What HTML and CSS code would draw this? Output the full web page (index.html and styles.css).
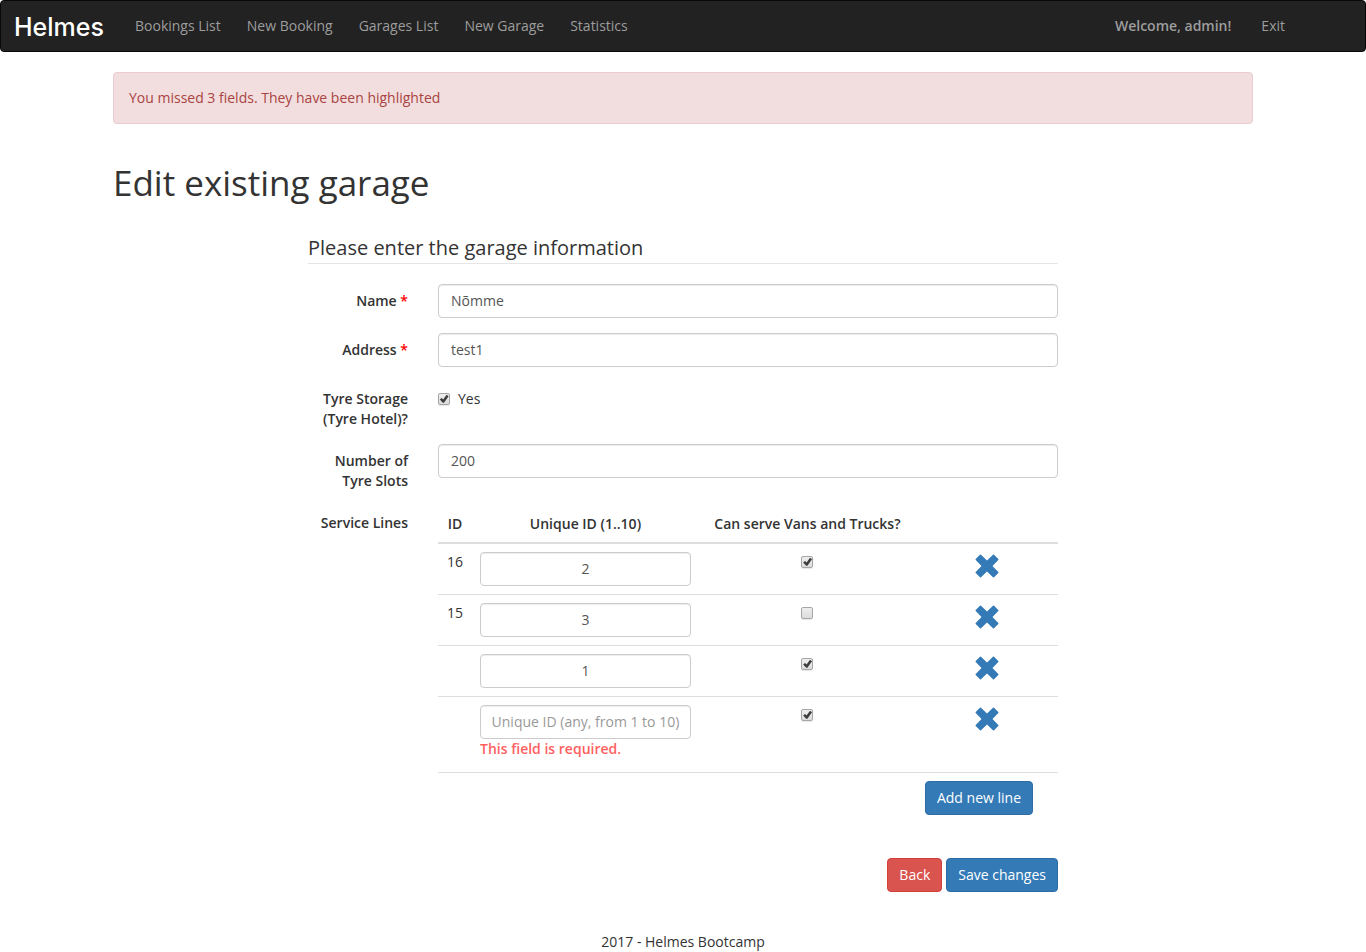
FILE: index.html
```html
<!DOCTYPE html>
<html lang="en">
<head>
<meta charset="utf-8">
<meta name="viewport" content="width=device-width, initial-scale=1">
<title>Edit existing garage</title>
<link rel="stylesheet" href="styles.css">
</head>
<body>
<svg class="sprite" aria-hidden="true">
  <symbol id="remove" viewBox="0 0 24 24"><path d="M6 .700 12 6.500 18 .700Q18.500 .300 19 .700L23.300 5Q23.700 5.500 23.300 6L17.500 12 23.300 18Q23.700 18.500 23.300 19L19 23.300Q18.500 23.700 18 23.300L12 17.500 6 23.300Q5.500 23.700 5 23.300L.700 19Q.300 18.500 .700 18L6.500 12 .700 6Q.300 5.500 .700 5L5 .700Q5.500 .300 6 .700Z" fill="currentColor"/></symbol>
</svg>
<nav class="navbar">
  <a class="brand" href="#">Helmes</a>
  <a class="nav-link" href="#">Bookings List</a>
  <a class="nav-link" href="#">New Booking</a>
  <a class="nav-link" href="#">Garages List</a>
  <a class="nav-link" href="#">New Garage</a>
  <a class="nav-link" href="#">Statistics</a>
  <div class="nav-user">
    <a class="nav-link" href="#"><strong>Welcome, admin!</strong></a>
    <a class="nav-link" href="#">Exit</a>
  </div>
</nav>
<main class="container">
  <div class="alert" role="alert">You missed 3 fields. They have been highlighted</div>
  <h1>Edit existing garage</h1>
  <form class="garage-form">
    <h2 class="legend">Please enter the garage information</h2>
    <div class="form-group">
      <label class="control-label" for="name">Name <span class="required">*</span></label>
      <input class="form-control" id="name" type="text" value="Nõmme">
    </div>
    <div class="form-group">
      <label class="control-label" for="address">Address <span class="required">*</span></label>
      <input class="form-control" id="address" type="text" value="test1">
    </div>
    <div class="form-group">
      <label class="control-label" for="storage">Tyre Storage (Tyre Hotel)?</label>
      <label class="check-label"><input class="check" id="storage" type="checkbox" checked>Yes</label>
    </div>
    <div class="form-group">
      <label class="control-label" for="slots">Number of Tyre Slots</label>
      <input class="form-control" id="slots" type="text" value="200">
    </div>
    <div class="form-group">
      <span class="control-label" id="lines-label">Service Lines</span>
      <table class="lines" aria-labelledby="lines-label">
        <thead>
          <tr><th class="col-id">ID</th><th class="col-unique">Unique ID (1..10)</th><th class="col-vans">Can serve Vans and Trucks?</th><th></th></tr>
        </thead>
        <tbody>
          <tr>
            <td>16</td>
            <td><input class="form-control" type="text" value="2" aria-label="Unique ID"></td>
            <td><input class="check" type="checkbox" checked aria-label="Can serve Vans and Trucks"></td>
            <td><button class="remove" type="button" aria-label="Remove line"><svg><use href="#remove"/></svg></button></td>
          </tr>
          <tr>
            <td>15</td>
            <td><input class="form-control" type="text" value="3" aria-label="Unique ID"></td>
            <td><input class="check" type="checkbox" aria-label="Can serve Vans and Trucks"></td>
            <td><button class="remove" type="button" aria-label="Remove line"><svg><use href="#remove"/></svg></button></td>
          </tr>
          <tr>
            <td></td>
            <td><input class="form-control" type="text" value="1" aria-label="Unique ID"></td>
            <td><input class="check" type="checkbox" checked aria-label="Can serve Vans and Trucks"></td>
            <td><button class="remove" type="button" aria-label="Remove line"><svg><use href="#remove"/></svg></button></td>
          </tr>
          <tr>
            <td></td>
            <td><input class="form-control" id="line4" type="text" placeholder="Unique ID (any, from 1 to 10)" aria-label="Unique ID"><label class="error" for="line4">This field is required.</label></td>
            <td><input class="check" type="checkbox" checked aria-label="Can serve Vans and Trucks"></td>
            <td><button class="remove" type="button" aria-label="Remove line"><svg><use href="#remove"/></svg></button></td>
          </tr>
          <tr><td class="add-cell" colspan="4"><button class="btn btn-primary" type="button">Add new line</button></td></tr>
        </tbody>
      </table>
    </div>
    <div class="actions">
      <button class="btn btn-danger" type="button">Back</button>
      <button class="btn btn-primary" type="submit">Save changes</button>
    </div>
  </form>
</main>
<footer class="footer">2017 - Helmes Bootcamp</footer>
</body>
</html>
```
FILE: styles.css
```css
* { box-sizing: border-box; }
body {
  margin: 0;
  font: 14px/20px "Trebuchet MS", "Open Sans", sans-serif;
  color: #333;
  background: #fff;
}
input, button { font: inherit; }
.sprite { display: none; }

.navbar {
  display: flex;
  align-items: center;
  min-height: 52px;
  margin-bottom: 20px;
  border: 1px solid #080808;
  border-radius: 4px;
  background: #222;
}
.brand {
  width: 121px;
  padding: 2px 0 0 13px;
  font: 500 25px/48px Inter, sans-serif;
  color: #fff;
  text-decoration: none;
}
.nav-link {
  padding: 15px 13px;
  color: #9d9d9d;
  text-decoration: none;
  white-space: nowrap;
}
.nav-link strong { font-weight: 600; }
.nav-user { display: flex; gap: 4px; margin-left: auto; margin-right: 67px; }

.container { max-width: 1170px; margin: 0 auto; padding: 0 15px; }
.alert {
  padding: 15px;
  border: 1px solid #ebccd1;
  border-radius: 4px;
  background: #f2dede;
  color: #a94442;
}
h1 { margin: 39px 0 30px; font-size: 35px; font-weight: 400; line-height: 40px; }

.garage-form { max-width: 750px; margin: 0 auto; }
.legend {
  margin: 0 0 20px;
  border-bottom: 1px solid #e5e5e5;
  font-size: 20px;
  font-weight: 400;
  line-height: 30px;
}
.form-group {
  display: grid;
  grid-template-columns: 100px minmax(0, 1fr);
  column-gap: 30px;
  align-items: start;
  margin-bottom: 15px;
}
.control-label { padding-top: 7px; font-weight: 600; text-align: right; }
.required { color: #f00; }
.form-control {
  display: block;
  width: 100%;
  height: 34px;
  padding: 5px 12px 7px;
  border: 1px solid #ccc;
  border-radius: 4px;
  background: #fff;
  box-shadow: inset 0 1px 1px rgba(0, 0, 0, .075);
  color: #555;
}
.form-control::placeholder { color: #999; opacity: 1; }

.check-label { display: flex; align-items: center; gap: 8px; padding-top: 7px; }
.check {
  appearance: none;
  display: block;
  width: 12px;
  height: 12px;
  margin: 0;
  border: 1px solid #a6a6a6;
  border-radius: 2px;
  background: linear-gradient(#eee, #dcdcdc);
  box-shadow: 0 1px 1px rgba(0, 0, 0, .1);
}
.check:checked::before {
  content: "";
  display: block;
  width: 10px;
  height: 10px;
  background: #3c3c3c;
  clip-path: polygon(8% 55%, 26% 40%, 42% 56%, 76% 8%, 96% 22%, 50% 88%, 38% 88%);
}

.lines { width: 100%; margin-bottom: 20px; border-spacing: 0; table-layout: fixed; text-align: center; }
.lines th { padding: 8px 0; border-bottom: 2px solid #ddd; font-weight: 600; line-height: 20px; white-space: nowrap; }
.lines td { padding: 8px; border-top: 1px solid #ddd; vertical-align: top; }
.lines tbody tr:first-child td { border-top: 0; }
.lines .form-control { padding-left: 8px; padding-right: 8px; text-align: center; }
.lines .check { margin: 4px auto 0; }
.col-id { width: 34px; }
.col-unique { width: 36.6%; }
.col-vans { width: 35%; }
.error { display: block; margin-bottom: 5px; color: #ff5f5f; font-weight: 600; text-align: left; }
.remove { display: block; margin: 2px auto 0; padding: 0; border: 0; background: none; color: #337ab7; cursor: pointer; }
.remove svg { display: block; width: 24px; height: 24px; }
.lines .add-cell { padding-right: 25px; text-align: right; }

.btn {
  padding: 6px 11px;
  border: 1px solid;
  border-radius: 4px;
  color: #fff;
  cursor: pointer;
}
.btn-primary { border-color: #2e6da4; background: #337ab7; }
.btn-danger { border-color: #d43f3a; background: #d9534f; }
.actions { display: flex; justify-content: flex-end; gap: 4px; }
.footer { margin-top: 40px; text-align: center; }
```
